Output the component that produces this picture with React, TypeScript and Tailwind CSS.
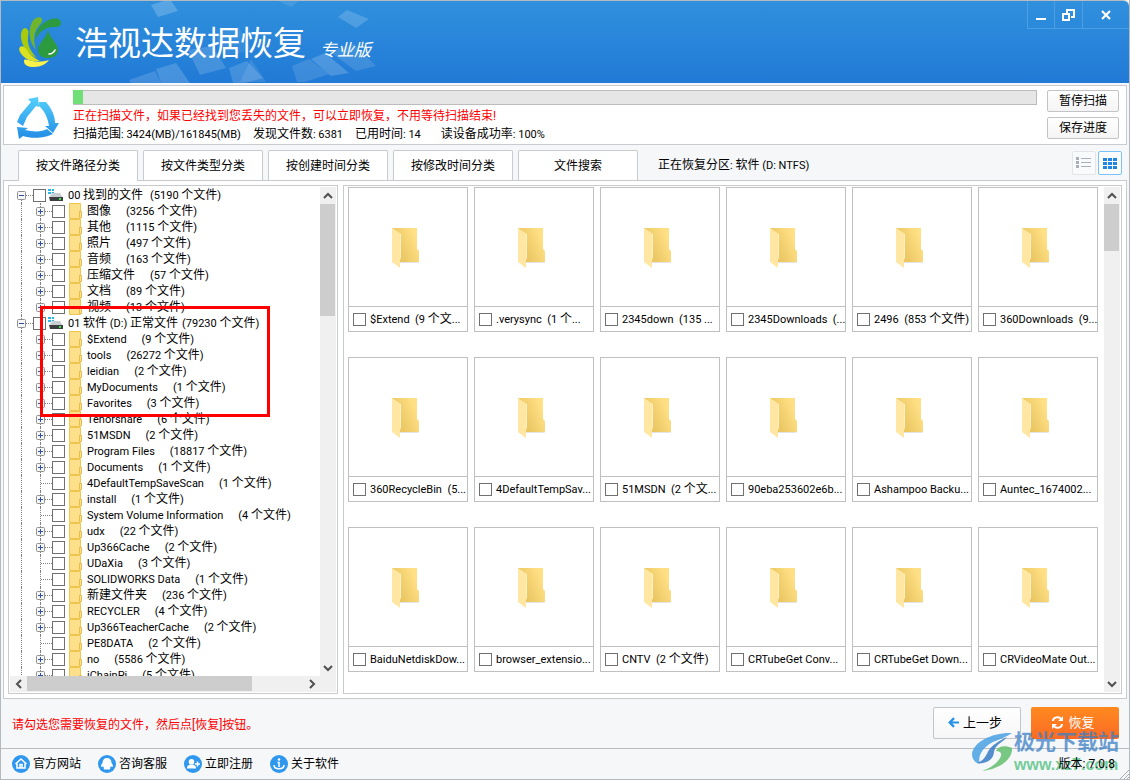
import { useState } from "react";

interface TreeItem {
  name: string;
  count: string;
  leaf?: boolean;
}

interface TreeRoot {
  name: string;
  count: string;
  gap: string;
  items: TreeItem[];
}

const tree: TreeRoot[] = [
  {
    name: "00 找到的文件",
    count: "5190",
    gap: "gap-[7px]",
    items: [
      { name: "图像", count: "3256" },
      { name: "其他", count: "1115" },
      { name: "照片", count: "497" },
      { name: "音频", count: "163" },
      { name: "压缩文件", count: "57" },
      { name: "文档", count: "89" },
      { name: "视频", count: "13" },
    ],
  },
  {
    name: "01 软件 (D:) 正常文件",
    count: "79230",
    gap: "gap-1",
    items: [
      { name: "$Extend", count: "9" },
      { name: "tools", count: "26272" },
      { name: "leidian", count: "2" },
      { name: "MyDocuments", count: "1" },
      { name: "Favorites", count: "3" },
      { name: "Tenorshare", count: "6" },
      { name: "51MSDN", count: "2" },
      { name: "Program Files", count: "18817" },
      { name: "Documents", count: "1" },
      { name: "4DefaultTempSaveScan", count: "1", leaf: true },
      { name: "install", count: "1" },
      { name: "System Volume Information", count: "4", leaf: true },
      { name: "udx", count: "22" },
      { name: "Up366Cache", count: "2" },
      { name: "UDaXia", count: "3", leaf: true },
      { name: "SOLIDWORKS Data", count: "1", leaf: true },
      { name: "新建文件夹", count: "236" },
      { name: "RECYCLER", count: "4" },
      { name: "Up366TeacherCache", count: "2" },
      { name: "PE8DATA", count: "2", leaf: true },
      { name: "no", count: "5586" },
      { name: "iChainPi", count: "5" },
    ],
  },
];

const cards = [
  "$Extend  (9 个文...",
  ".verysync  (1 个...",
  "2345down  (135 ...",
  "2345Downloads  (...",
  "2496  (853 个文件)",
  "360Downloads  (9...",
  "360RecycleBin  (5...",
  "4DefaultTempSav...",
  "51MSDN  (2 个文...",
  "90eba253602e6b...",
  "Ashampoo Backu...",
  "Auntec_1674002...",
  "BaiduNetdiskDow...",
  "browser_extensio...",
  "CNTV  (2 个文件)",
  "CRTubeGet Conv...",
  "CRTubeGet Down...",
  "CRVideoMate Out...",
];

const tabs = ["按文件路径分类", "按文件类型分类", "按创建时间分类", "按修改时间分类", "文件搜索"];

// Latin runs are 11px, Chinese runs 12px
function Txt({ children }: { children: string }) {
  const parts = children.split(/([\u3000-\u9fff\uff00-\uffef]+)/);

  return (
    <span className="whitespace-pre pt-0.5 text-[11px]">
      {parts.map((part, i) =>
        i % 2 === 1 ? (
          <span key={i} className="text-xs/none">
            {part}
          </span>
        ) : (
          part
        )
      )}
    </span>
  );
}

function Checkbox() {
  return (
    <input
      type="checkbox"
      className="size-[13px] shrink-0 appearance-none border border-[#707070] bg-white checked:bg-[#2a8be0]"
    />
  );
}

function Logo() {
  return (
    <svg width="44" height="52" viewBox="0 0 44 52" aria-hidden="true">
      <path d="M42 7C42 3 37 1 30 4C21 8 17 14 16 24C20 16 26 11 34 11C38 11 42 11 42 7z" fill="#2c9a3f" />
      <path d="M23 3C21 0 16 1 13 6C9 14 10 26 17 34C14 24 15 16 19 11C21 8 24 6 23 3z" fill="#71b52b" />
      <path d="M9 14C6 10 3 12 2 18C1 28 8 38 18 42C11 35 8 28 9 21C9 18 10 16 9 14z" fill="#a9cb0e" />
      <path d="M1 31C-1 33 1 37 4 40C9 45 15 46 21 45C15 42 11 39 8 34C6 31 3 29 1 31z" fill="#dbe021" />
      <path d="M5 45C5 49 9 51 15 51C22 51 27 48 30 44C24 46 18 46 13 45C9 44 5 42 5 45z" fill="#fdf24a" />
      <path d="M29 14C27 23 19 27 19 34C19 39 23 42 29 42S39 39 39 34C39 27 31 23 29 14z" fill="#2c9a3f" />
      <path d="M30 38Q34 38 36 34" fill="none" stroke="#fff" strokeWidth="1.600" strokeLinecap="round" />
    </svg>
  );
}

function RecycleIcon() {
  return (
    <svg width="44" height="44" viewBox="0 0 44 44" className="shrink-0" aria-hidden="true">
      <defs>
        <linearGradient id="recycle" x1="0" y1="0" x2="0" y2="44" gradientUnits="userSpaceOnUse">
          <stop offset="0" stopColor="#54d0fb" />
          <stop offset="1" stopColor="#2089e4" />
        </linearGradient>
      </defs>
      <g fill="url(#recycle)">
        <path d="M12 2L22 0L23 10L20 9L11 20L7 29L1 25L4 18L15 5z" />
        <path d="M23 5L30 5C36 12 39 19 39 26L43 26L37 36L29 29L33 29C32 21 28 13 23 9z" />
        <path d="M1 30L12 31L9 33C18 35 26 35 31 32L37 37C30 41 15 42 7 39L3 42z" />
      </g>
    </svg>
  );
}

function DiskIcon() {
  return (
    <svg width="16" height="16" viewBox="0 0 16 16" className="shrink-0" aria-hidden="true">
      <path d="M0 2h3v2H0zM4 2h2v2H4zM0 5h3v2H0zM4 5h2v2H4z" fill="#22b9ef" />
      <path d="M4 6h8l3 5H1z" fill="#c9ccd0" />
      <path d="M1 10h14v4H2z" fill="#3c3f42" />
      <path d="M11 11h2v2h-2z" fill="#42e04a" />
    </svg>
  );
}

function SmallFolder() {
  return (
    <svg width="14" height="16" viewBox="0 0 14 16" className="shrink-0" aria-hidden="true">
      <path d="M.5.500h11v15H.5z" fill="#ffe08a" stroke="#edc650" />
      <path d="M10.500 8.500h2v6h-2z" fill="#fbe29a" stroke="#e6bd46" />
    </svg>
  );
}

function BigFolder() {
  return (
    <svg width="30" height="42" viewBox="0 0 30 42" aria-hidden="true">
      <defs>
        <linearGradient id="folderBack" x1="8" y1="24" x2="27" y2="16" gradientUnits="userSpaceOnUse">
          <stop offset="0" stopColor="#ebc763" />
          <stop offset="1" stopColor="#ffe085" />
        </linearGradient>
      </defs>
      <path d="M8 35h21l-3 1H9z" fill="#e4e4e4" />
      <path d="M1 1h25v21l2 2v11H8z" fill="url(#folderBack)" />
      <path d="M1 1l9 6v24l-1 2v8l-8-6z" fill="#ffe7a3" />
      <path d="M9.500 7v24" stroke="#fff1c4" />
    </svg>
  );
}

function Chevron({ dir }: { dir: "up" | "down" | "left" | "right" }) {
  const paths = {
    up: "M1 7l4-4 4 4",
    down: "M1 3l4 4 4-4",
    left: "M7 1L3 5l4 4",
    right: "M3 1l4 4-4 4",
  };

  return (
    <svg width="10" height="10" viewBox="0 0 10 10" aria-hidden="true">
      <path d={paths[dir]} fill="none" stroke="#505050" strokeWidth="2" />
    </svg>
  );
}

function VScroll({ thumb }: { thumb: string }) {
  return (
    <div className="flex w-4 shrink-0 flex-col bg-[#f0f0f0]">
      <button aria-label="向上" className="flex h-[17px] items-center justify-center">
        <Chevron dir="up" />
      </button>
      <div className={`mr-px bg-[#cdcdcd] ${thumb}`} />
      <button aria-label="向下" className="mt-auto flex h-[17px] items-center justify-center">
        <Chevron dir="down" />
      </button>
    </div>
  );
}

function Expander({ open, onClick }: { open: boolean; onClick?: () => void }) {
  return (
    <button onClick={onClick} aria-label={open ? "折叠" : "展开"} className="block size-[9px]">
      <svg width="9" height="9" viewBox="0 0 9 9">
        <rect x="0.500" y="0.500" width="8" height="8" rx="1" fill="#f6f6f6" stroke="#919191" />
        <path d={open ? "M2 4.500h5" : "M2 4.500h5M4.500 2v5"} stroke="#2f4fa5" />
      </svg>
    </button>
  );
}

function RootRow({ root, first, open, onToggle }: { root: TreeRoot; first: boolean; open: boolean; onToggle: () => void }) {
  return (
    <div className="flex h-4 items-center pl-[7px]">
      <div className="flex h-4 w-[9px] flex-col">
        <span className={`ml-1 h-1 border-l border-dotted ${first ? "border-transparent" : "border-[#808080]"}`} />
        <Expander open={open} onClick={onToggle} />
        <span className="ml-1 flex-1 border-l border-dotted border-[#808080]" />
      </div>
      <span className="w-[7px] border-t border-dotted border-[#808080]" />
      <label className="flex items-center whitespace-nowrap">
        <Checkbox />
        <span className="ml-0.5 mr-1">
          <DiskIcon />
        </span>
        <span className={`flex ${root.gap}`}>
          <Txt>{root.name}</Txt>
          <Txt>{`(${root.count} 个文件)`}</Txt>
        </span>
      </label>
    </div>
  );
}

function ItemRow({ item }: { item: TreeItem }) {
  return (
    <div className="flex h-4 items-center">
      <span className="ml-[11px] h-4 w-[15px] border-l border-dotted border-[#808080]" />
      {item.leaf ? (
        <>
          <span className="ml-1 h-4 border-l border-dotted border-[#808080]" />
          <span className="w-[11px] border-t border-dotted border-[#808080]" />
        </>
      ) : (
        <>
          <div className="flex h-4 w-[9px] flex-col">
            <span className="ml-1 h-1 border-l border-dotted border-[#808080]" />
            <Expander open={false} />
            <span className="ml-1 flex-1 border-l border-dotted border-[#808080]" />
          </div>
          <span className="w-[7px] border-t border-dotted border-[#808080]" />
        </>
      )}
      <label className="flex items-center whitespace-nowrap">
        <Checkbox />
        <span className="mx-1">
          <SmallFolder />
        </span>
        <span className="flex gap-[15px]">
          <Txt>{item.name}</Txt>
          <Txt>{`(${item.count} 个文件)`}</Txt>
        </span>
      </label>
    </div>
  );
}

function Header() {
  return (
    <header className="flex h-[83px] shrink-0 items-start justify-between rounded-tr-md border-t border-[#b4bac2] bg-linear-to-b from-[#3090dd] to-[#217ad6] text-white">
      <div className="relative h-full w-[420px]">
        <svg width="420" height="82" viewBox="0 0 420 82" className="absolute inset-0" aria-hidden="true">
          <g fill="#fff">
            <path d="M150 4l19-6 8 12-20 6z" opacity=".2" />
            <path d="M346 9l22 9-13 9-18-11z" opacity=".17" />
            <path d="M275-1h24l-9 7z" opacity=".1" />
            <path d="M128 79l26-9 6 12h-30z" opacity=".15" />
            <path d="M155 68l20-6 14 20h-29z" opacity=".17" />
            <path d="M187 49l24-4 14 22-26 7z" opacity=".15" />
            <path d="M214 34l24-8 12 22-24 9z" opacity=".07" />
            <path d="M228 67l18-7 16 17-18 5h-12z" opacity=".15" />
            <path d="M250 58l15 23h-26z" opacity=".1" />
            <path d="M291 65l17-7 20 15-24 8h-8z" opacity=".12" />
            <path d="M310 58l14-6 24 20-18 3z" opacity=".18" />
            <path d="M328 50l27 20 20-5-22-22z" opacity=".12" />
          </g>
        </svg>
        <div className="relative flex h-full items-center pl-[18px]">
          <Logo />
          <h1 className="ml-3 mt-1 whitespace-nowrap text-[33px]/[40px]">浩视达数据恢复</h1>
          <span className="ml-3.5 mt-4 whitespace-nowrap text-[17px]/[20px] italic">专业版</span>
        </div>
      </div>
      <div className="flex h-7 divide-x divide-[#4c9fe2] border-b border-l border-[#4c9fe2]">
        <button aria-label="最小化" className="flex w-[27px] items-center justify-center">
          <svg width="10" height="12" viewBox="0 0 10 12">
            <path d="M0 9h10v2H0z" fill="#fff" />
          </svg>
        </button>
        <button aria-label="还原" className="flex w-7 items-center justify-center">
          <svg width="13" height="12" viewBox="0 0 13 12" fill="none" stroke="#fff" strokeWidth="2">
            <path d="M5 4V1h7v7H9" />
            <path d="M1 5h6v6H1z" />
          </svg>
        </button>
        <button aria-label="关闭" className="flex w-[46px] items-center justify-center">
          <svg width="10" height="10" viewBox="0 0 10 10" stroke="#fff" strokeWidth="2.200">
            <path d="M1 1l8 8M9 1L1 9" />
          </svg>
        </button>
      </div>
    </header>
  );
}

function ScanPanel() {
  return (
    <section className="mx-0.5 mt-0.5 flex h-[60px] shrink-0 border border-[#c9cacf] bg-white">
      <div className="mt-[11px] pl-3">
        <RecycleIcon />
      </div>
      <div className="ml-[13px] mt-1 flex-1">
        <div role="progressbar" aria-valuenow={1} className="h-[15px] border border-[#bcbcbc] bg-[#e6e6e6]">
          <div className="-ml-px -mt-px h-3.5 w-2.5 bg-[#71df77]" />
        </div>
        <p className="mt-[3px] text-xs/[16px] text-[#ff0000]">
          正在扫描文件，如果已经找到您丢失的文件，可以立即恢复，不用等待扫描结束!
        </p>
        <p className="mt-0.5 flex h-4 items-center gap-3 whitespace-nowrap">
          <Txt>扫描范围: 3424(MB)/161845(MB)</Txt>
          <Txt>发现文件数: 6381</Txt>
          <Txt>已用时间: 14</Txt>
          <span className="ml-2 flex">
            <Txt>读设备成功率: 100%</Txt>
          </span>
        </p>
      </div>
      <div className="ml-2.5 mr-[7px] mt-1 flex flex-col gap-[5px]">
        {["暂停扫描", "保存进度"].map((label) => (
          <button
            key={label}
            className="h-[22px] w-[72px] rounded-xs border border-[#c3c3c7] bg-linear-to-b from-white to-[#f4f4f5] text-xs/none"
          >
            {label}
          </button>
        ))}
      </div>
    </section>
  );
}

function BottomIcon({ index }: { index: number }) {
  return (
    <svg width="18" height="18" viewBox="0 0 18 18" fill="none" stroke="#fff" strokeWidth="1.500" aria-hidden="true">
      <circle cx="9" cy="9" r="9" fill="#2f97ee" stroke="none" />
      {index === 0 && <path d="M3.500 9L9 4l5.500 5M5 8.500V13h8V8.500M8 13V9.500h2V13" />}
      {index === 1 && (
        <path
          d="M9 3C6 3 4.500 5 4.500 8C3 9.500 2.800 11.500 3.500 12C4 12.300 4.500 11.800 5 11.200L6 13C5 14 6 14.500 7 14.500h4C12 14.500 13 14 12 13L13 11.200C13.500 11.800 14 12.300 14.500 12C15.200 11.500 15 9.500 13.500 8C13.500 5 12 3 9 3z"
          fill="#fff"
          stroke="none"
        />
      )}
      {index === 2 && (
        <>
          <circle cx="7.500" cy="6.800" r="2.800" fill="#fff" stroke="none" />
          <path d="M2.800 13.500c0-2.500 2-4 4.700-4s4.700 1.500 4.700 4z" fill="#fff" stroke="none" />
          <path d="M11 9h5M13.500 6.500v5" />
        </>
      )}
      {index === 3 && (
        <>
          <circle cx="9" cy="4.500" r="1.300" fill="#fff" stroke="none" />
          <path d="M7.500 7.500H9V12M4 10c0 5 10 5 10 0" />
        </>
      )}
    </svg>
  );
}

function Watermark() {
  return (
    <div className="pointer-events-none absolute bottom-1 right-2.5 flex items-end">
      <svg width="43" height="44" viewBox="0 0 43 44" className="opacity-85" aria-hidden="true">
        <path d="M41 2C22 1 2 11 1 23C1 28 4 32 9 33C6 25 12 16 22 11C29 8 35 6 41 2z" fill="#4aa2e4" />
        <path d="M6 32C10 33 16 32 20 28C24 24 22 20 25 16C28 12 33 10 36 6C28 10 21 14 18 19C15 24 14 29 6 32z" fill="#3a7cc8" />
        <path d="M25 20C27 15 34 14 41 17C42 27 30 38 11 40C20 37 28 31 30 25C31 22 29 20 25 20z" fill="#63bf6e" />
      </svg>
      <div className="flex flex-col">
        <span className="whitespace-nowrap text-[21px]/[26px] font-bold text-[#3c7fc4]/75">极光下载站</span>
        <span className="font-['Liberation_Sans'] text-base/[20px] font-bold text-[#4fc07f]/80">www.xz7.com</span>
      </div>
    </div>
  );
}

export default function App() {
  const [tab, setTab] = useState(0);
  const [closed, setClosed] = useState<number[]>([]);

  const toggleRoot = (i: number) => {
    setClosed(closed.includes(i) ? closed.filter((c) => c !== i) : [...closed, i]);
  };

  return (
    <div className="relative flex h-screen flex-col overflow-hidden border-x border-b border-[#b5b9bf] bg-[#f5f7f9] font-['Roboto','Noto_Sans_CJK_SC',sans-serif] text-xs text-black">
      <Header />
      <ScanPanel />

      {/* Tab */}
      <nav className="mx-0.5 flex h-[35px] shrink-0 items-end pl-[15px] pr-[5px]">
        <div className="flex items-end gap-[5px]">
          {tabs.map((label, i) => (
            <button
              key={label}
              onClick={() => setTab(i)}
              className={`relative w-[120px] rounded-t-xs border border-b-0 border-[#c9cacf] bg-white text-xs/none ${
                tab === i ? "-mb-px h-[31px]" : "h-[30px]"
              }`}
            >
              {label}
            </button>
          ))}
        </div>
        <p className="ml-5 flex h-[30px] items-center whitespace-nowrap">
          <Txt>正在恢复分区: 软件 (D: NTFS)</Txt>
        </p>
        <div className="mb-[5px] ml-auto flex gap-0.5">
          <button aria-label="列表" className="flex size-6 items-center justify-center rounded-xs border border-[#e3e5e8] bg-[#f9fafb]">
            <svg width="16" height="12" viewBox="0 0 16 12" fill="#a9afb8">
              <path d="M0 0h3v3H0zM0 4h3v3H0zM0 8h3v3H0zM5 1h10v1H5zM5 5h10v1H5zM5 9h10v1H5z" />
            </svg>
          </button>
          <button aria-label="缩略图" className="flex size-6 items-center justify-center rounded-xs border border-[#79c1f8] bg-white">
            <svg width="14" height="11" viewBox="0 0 14 11" fill="#1f86e4">
              <path d="M0 0h4v3H0zM5 0h4v3H5zM10 0h4v3h-4zM0 4h4v3H0zM5 4h4v3H5zM10 4h4v3h-4zM0 8h4v3H0zM5 8h4v3H5zM10 8h4v3h-4z" />
            </svg>
          </button>
        </div>
      </nav>

      <main className="mx-0.5 flex min-h-0 flex-1 gap-[5px] border border-[#c9cacf] bg-white p-1">
        {/* Pohon folder */}
        <aside className="flex w-[330px] shrink-0 flex-col border border-[#c9cacf] p-px">
          <div className="flex min-h-0 flex-1">
            <div className="relative min-w-0 flex-1 overflow-hidden">
              {tree.map((root, i) => (
                <div key={root.name}>
                  <RootRow root={root} first={i === 0} open={!closed.includes(i)} onToggle={() => toggleRoot(i)} />
                  {!closed.includes(i) && root.items.map((item) => <ItemRow key={item.name} item={item} />)}
                </div>
              ))}
              <div className="pointer-events-none absolute left-[30px] top-[119px] h-[111px] w-[230px] border-3 border-[#ff0000]" />
            </div>
            <VScroll thumb="h-28" />
          </div>
          <div className="flex h-4 shrink-0 bg-[#f0f0f0] pr-4">
            <button aria-label="向左" className="flex w-[17px] items-center justify-center">
              <Chevron dir="left" />
            </button>
            <div className="mb-px w-[225px] bg-[#cdcdcd]" />
            <button aria-label="向右" className="ml-auto flex w-[17px] items-center justify-center">
              <Chevron dir="right" />
            </button>
          </div>
        </aside>

        {/* Thumbnail */}
        <section className="flex min-w-0 flex-1 border border-[#c9cacf] p-px">
          <div className="grid flex-1 grid-cols-[repeat(auto-fill,120px)] content-start gap-x-1.5 gap-y-[25px] overflow-hidden pl-[3px]">
            {cards.map((name) => (
              <label key={name} className="flex h-[145px] flex-col border border-[#c0c0c0]">
                <span className="flex flex-1 items-center justify-center pr-1 pt-0.5">
                  <BigFolder />
                </span>
                <span className="flex h-[25px] items-center gap-1 overflow-hidden border-t border-[#c0c0c0] pl-1">
                  <Checkbox />
                  <Txt>{name}</Txt>
                </span>
              </label>
            ))}
          </div>
          <VScroll thumb="h-[47px]" />
        </section>
      </main>

      <div className="flex h-[49px] shrink-0 items-center justify-between pb-0.5 pl-[11px] pr-2.5">
        <p className="pt-1 text-xs text-[#ff0000]">请勾选您需要恢复的文件，然后点[恢复]按钮。</p>
        <div className="flex gap-2.5">
          <button className="flex h-8 w-[88px] items-center justify-center gap-1 rounded-xs border border-[#c3c5ca] bg-linear-to-b from-white to-[#f6f6f7] pr-1 text-[13px]/none">
            <svg width="11" height="11" viewBox="0 0 10 10" fill="none" stroke="#2490ea" strokeWidth="2" aria-hidden="true">
              <path d="M10 5H1.500M5.500 1l-4 4 4 4" />
            </svg>
            上一步
          </button>
          <button className="flex h-8 w-[88px] items-center justify-center gap-1 rounded-xs bg-linear-to-b from-[#ff8a1f] to-[#fb6a25] pr-1 text-[13px]/none text-white">
            <svg width="13" height="13" viewBox="0 0 13 13" fill="none" stroke="#fff" strokeWidth="2" aria-hidden="true">
              <path d="M2 5C2 1 8 0 10 3M11 8C11 12 5 13 3 10" />
              <path d="M12 0v5H7zM1 13V8h5z" fill="#fff" stroke="none" />
            </svg>
            恢复
          </button>
        </div>
      </div>

      <footer className="flex h-[31px] shrink-0 items-center gap-[17px] border-t border-[#b9bcc1] pl-[11px] pr-3.5">
        {["官方网站", "咨询客服", "立即注册", "关于软件"].map((label, i) => (
          <a key={label} href="#" className="flex items-center gap-[3px] text-xs/none">
            <BottomIcon index={i} />
            {label}
          </a>
        ))}
        <span className="relative z-10 ml-auto text-xs">版本: 7.0.8</span>
      </footer>

      <Watermark />
      <svg width="10" height="10" viewBox="0 0 10 10" className="absolute bottom-0 right-0" stroke="#a9acb1" aria-hidden="true">
        <path d="M1 10l9-9M5 10l5-5M8 10l2-2" />
      </svg>
    </div>
  );
}
